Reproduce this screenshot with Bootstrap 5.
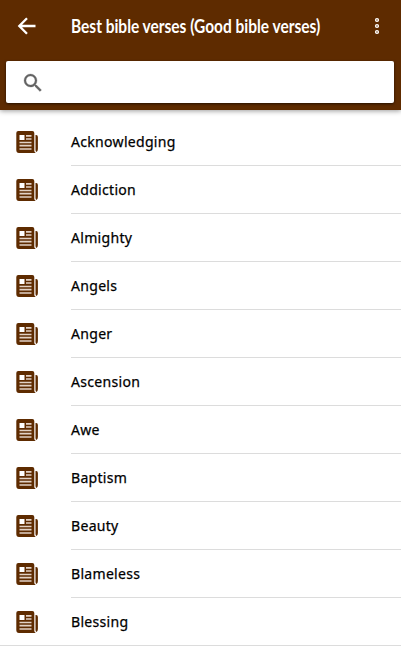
<!DOCTYPE html>
<html lang="en">
<head>
<meta charset="utf-8">
<meta name="viewport" content="width=device-width, initial-scale=1">
<title>Best bible verses</title>
<link href="https://cdn.jsdelivr.net/npm/bootstrap@5.3.0/dist/css/bootstrap.min.css" rel="stylesheet">
<style>
body{font-family:"Noto Sans","Open Sans",sans-serif;background:#fff;color:#000;overflow:hidden}
.app-head{background:#5e2b00;height:110px;box-shadow:0 1px 5px rgba(0,0,0,.4)}
.bar{height:61px;padding:0 14px 9px 15px}
.bar svg,.search svg,.topic svg{display:block;flex:none}
.app-title{font:700 19px/24px Lato,sans-serif;margin:0 0 1px 32px;width:250px;transform:scaleX(.814);transform-origin:0 50%;white-space:nowrap;color:#fff}
.search{height:42px;margin:0 7px 0 6px;padding:1px 0 0 15px;border-radius:2px;box-shadow:0 1px 3px rgba(0,0,0,.6)}
.topics{padding-top:8px}
.topic{height:48px;padding-left:15px}
.topic-name{margin-left:32px;height:48px;border-bottom:1px solid #dcdcdc;font-size:15px;line-height:47px}
.topic-name span{display:inline-block;letter-spacing:.3px;transform:scaleX(.937);transform-origin:0 50%;-webkit-text-stroke:.25px #000}
.topic:last-child{box-shadow:inset 0 -1px #dcdcdc}
</style>
<script src="https://cdn.jsdelivr.net/npm/bootstrap@5.3.0/dist/js/bootstrap.bundle.min.js"></script>
</head>
<body>
<svg class="d-none" xmlns="http://www.w3.org/2000/svg">
<symbol id="news" viewBox="0 0 24 24">
<path fill="#5e2b00" d="M3.300 1h14q2 0 2 2v18q0 1 1.500 2H4q-2.700 0-2.700-3V3q0-2 2-2z"/>
<path fill="#5e2b00" d="M20.500 5h.7q1.700 0 1.700 2v12q0 2-1.300 3-1.100-.5-1.100-2z"/>
<path fill="#fff" d="M4.500 5h5v5h-5z"/>
<path stroke="#e2d2c6" stroke-width="1.700" d="M11 5.800h5.500M11 9h5.500M4.500 12.500h12M4.500 15.700h12M4.500 19h12"/>
</symbol>
</svg>
<header class="app-head position-relative">
<div class="bar d-flex align-items-center">
<svg width="24" height="24" viewBox="0 0 24 24" fill="none" stroke="#fff" stroke-width="2.300"><path d="M20.500 12H4.500M12 4.300 4.300 12l7.700 7.700"/></svg>
<h1 class="app-title">Best bible verses (Good bible verses)</h1>
<svg class="ms-auto" width="20" height="24" viewBox="0 0 20 24" fill="#a68a72" stroke="#fff" stroke-width="1.200"><circle cx="10" cy="6" r="1.500"/><circle cx="10" cy="12" r="1.500"/><circle cx="10" cy="18" r="1.500"/></svg>
</div>
<div class="search bg-white d-flex align-items-center">
<svg width="24" height="24" viewBox="0 0 24 24" fill="#646464" stroke="#646464" stroke-width=".3"><path d="M15.500 14h-.79l-.28-.27A6.470 6.470 0 0 0 16 9.500 6.500 6.500 0 1 0 9.500 16c1.610 0 3.090-.59 4.230-1.570l.27.28v.79l5 4.990L20.490 19zM9.500 14a4.500 4.500 0 1 1 0-9 4.500 4.500 0 0 1 0 9z"/></svg>
</div>
</header>
<main class="topics">
<div class="topic d-flex align-items-center"><svg width="24" height="24"><use href="#news"/></svg><div class="topic-name flex-grow-1"><span>Acknowledging</span></div></div>
<div class="topic d-flex align-items-center"><svg width="24" height="24"><use href="#news"/></svg><div class="topic-name flex-grow-1"><span>Addiction</span></div></div>
<div class="topic d-flex align-items-center"><svg width="24" height="24"><use href="#news"/></svg><div class="topic-name flex-grow-1"><span>Almighty</span></div></div>
<div class="topic d-flex align-items-center"><svg width="24" height="24"><use href="#news"/></svg><div class="topic-name flex-grow-1"><span>Angels</span></div></div>
<div class="topic d-flex align-items-center"><svg width="24" height="24"><use href="#news"/></svg><div class="topic-name flex-grow-1"><span>Anger</span></div></div>
<div class="topic d-flex align-items-center"><svg width="24" height="24"><use href="#news"/></svg><div class="topic-name flex-grow-1"><span>Ascension</span></div></div>
<div class="topic d-flex align-items-center"><svg width="24" height="24"><use href="#news"/></svg><div class="topic-name flex-grow-1"><span>Awe</span></div></div>
<div class="topic d-flex align-items-center"><svg width="24" height="24"><use href="#news"/></svg><div class="topic-name flex-grow-1"><span>Baptism</span></div></div>
<div class="topic d-flex align-items-center"><svg width="24" height="24"><use href="#news"/></svg><div class="topic-name flex-grow-1"><span>Beauty</span></div></div>
<div class="topic d-flex align-items-center"><svg width="24" height="24"><use href="#news"/></svg><div class="topic-name flex-grow-1"><span>Blameless</span></div></div>
<div class="topic d-flex align-items-center"><svg width="24" height="24"><use href="#news"/></svg><div class="topic-name flex-grow-1"><span>Blessing</span></div></div>
</main>
</body>
</html>
